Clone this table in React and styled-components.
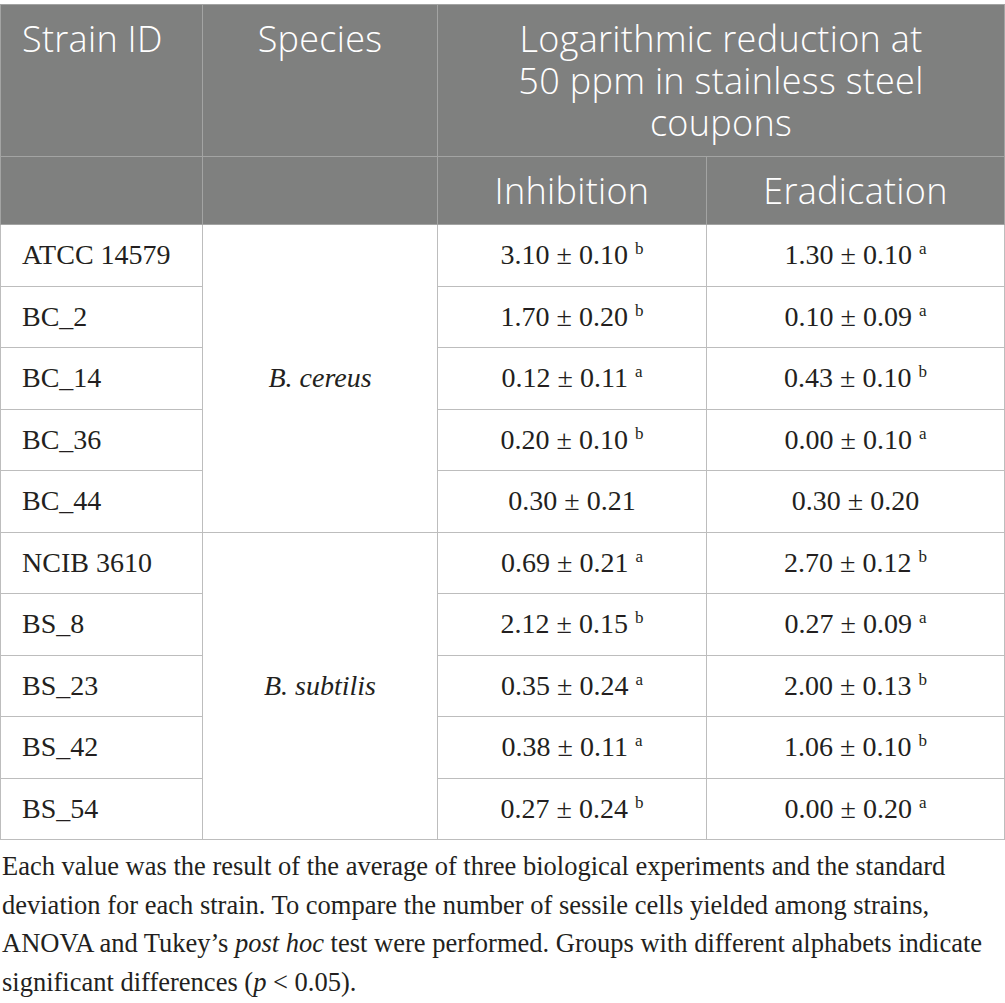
import React from "react";
import styled, { createGlobalStyle } from "styled-components";

const GlobalStyle = createGlobalStyle`
  html, body {
    margin: 0;
    padding: 0;
    background: #ffffff;
  }
`;

const Page = styled.div`
  width: 1005px;
  padding-top: 4px;
  box-sizing: border-box;
`;

const Table = styled.table`
  width: 1004px;
  border-collapse: collapse;
  table-layout: fixed;
  border: 1.5px solid #bdbdbd;
`;

const HeadCell = styled.th`
  background: #7f807f;
  color: #ffffff;
  font-family: "Open Sans", "Liberation Sans", sans-serif;
  font-weight: 300;
  font-size: 36px;
  line-height: 42px;
  letter-spacing: 0.3px;
  border: 1.5px solid #a3a4a3;
  text-align: ${({ align }) => align || "center"};
  vertical-align: ${({ valign }) => valign || "top"};
  padding: ${({ pad }) => pad || "0"};
  height: ${({ h }) => h}px;
  box-sizing: border-box;
`;

const Cell = styled.td`
  font-family: "Liberation Serif", "Times New Roman", serif;
  font-size: 28px;
  color: #231f20;
  height: 61.5px;
  box-sizing: border-box;
  border: 1.5px solid #bdbdbd;
  text-align: ${({ align }) => align || "center"};
  padding: ${({ align }) => (align === "left" ? "0 0 0 21px" : "0")};
  vertical-align: middle;
  font-style: ${({ italic }) => (italic ? "italic" : "normal")};
`;

const Sup = styled.sup`
  font-size: 17px;
  vertical-align: 10px;
  line-height: 0;
  margin-left: 7px;
`;

const Note = styled.p`
  margin: 7px 0 0 2px;
  font-family: "Liberation Serif", "Times New Roman", serif;
  font-size: 26.5px;
  line-height: 38.5px;
  color: #231f20;
  white-space: nowrap;
`;

const rows = [
  ["ATCC 14579", "3.10 ± 0.10", "b", "1.30 ± 0.10", "a"],
  ["BC_2", "1.70 ± 0.20", "b", "0.10 ± 0.09", "a"],
  ["BC_14", "0.12 ± 0.11", "a", "0.43 ± 0.10", "b"],
  ["BC_36", "0.20 ± 0.10", "b", "0.00 ± 0.10", "a"],
  ["BC_44", "0.30 ± 0.21", "", "0.30 ± 0.20", ""],
  ["NCIB 3610", "0.69 ± 0.21", "a", "2.70 ± 0.12", "b"],
  ["BS_8", "2.12 ± 0.15", "b", "0.27 ± 0.09", "a"],
  ["BS_23", "0.35 ± 0.24", "a", "2.00 ± 0.13", "b"],
  ["BS_42", "0.38 ± 0.11", "a", "1.06 ± 0.10", "b"],
  ["BS_54", "0.27 ± 0.24", "b", "0.00 ± 0.20", "a"],
];

const Value = ({ v, s }) => (
  <>
    {v}
    {s && <Sup>{s}</Sup>}
  </>
);

export default function App() {
  return (
    <Page>
      <GlobalStyle />
      <Table>
        <colgroup>
          <col style={{ width: 202 }} />
          <col style={{ width: 235 }} />
          <col style={{ width: 269 }} />
          <col style={{ width: 298 }} />
        </colgroup>
        <thead>
          <tr>
            <HeadCell align="left" pad="13px 0 0 21px" h={152}>
              Strain ID
            </HeadCell>
            <HeadCell pad="13px 0 0 0" h={152}>
              Species
            </HeadCell>
            <HeadCell colSpan={2} pad="13px 66px 0" h={152}>
              Logarithmic reduction at 50 ppm in stainless steel coupons
            </HeadCell>
          </tr>
          <tr>
            <HeadCell h={68} />
            <HeadCell h={68} />
            <HeadCell h={68} valign="middle">
              Inhibition
            </HeadCell>
            <HeadCell h={68} valign="middle">
              Eradication
            </HeadCell>
          </tr>
        </thead>
        <tbody>
          {rows.map((r, i) => (
            <tr key={r[0]}>
              <Cell align="left">{r[0]}</Cell>
              {i === 0 && (
                <Cell rowSpan={5} italic>
                  B. cereus
                </Cell>
              )}
              {i === 5 && (
                <Cell rowSpan={5} italic>
                  B. subtilis
                </Cell>
              )}
              <Cell>
                <Value v={r[1]} s={r[2]} />
              </Cell>
              <Cell>
                <Value v={r[3]} s={r[4]} />
              </Cell>
            </tr>
          ))}
        </tbody>
      </Table>
      <Note>
        Each value was the result of the average of three biological experiments and the standard
        <br />
        deviation for each strain. To compare the number of sessile cells yielded among strains,
        <br />
        ANOVA and Tukey’s <i>post hoc</i> test were performed. Groups with different alphabets indicate
        <br />
        significant differences (<i>p</i> &lt; 0.05).
      </Note>
    </Page>
  );
}
